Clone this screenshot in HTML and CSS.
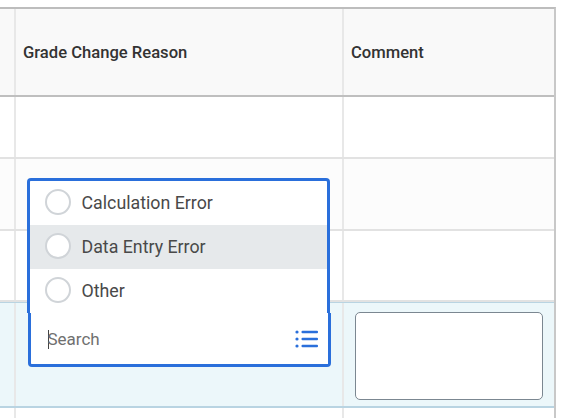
FILE: index.html
```html
<!DOCTYPE html>
<html lang="en">
<head>
	<meta charset="UTF-8">
	<title>Grade Change Reason</title>
	<link rel="stylesheet" href="styles.css">
</head>
<body>
	<div class="grid">
		<div class="row head">
			<div class="cell"></div>
			<div class="cell">Grade Change Reason</div>
			<div class="cell">Comment</div>
		</div>
		<div class="row r1">
			<div class="cell"></div>
			<div class="cell"></div>
			<div class="cell"></div>
		</div>
		<div class="row r2">
			<div class="cell"></div>
			<div class="cell"></div>
			<div class="cell"></div>
		</div>
		<div class="row r3">
			<div class="cell"></div>
			<div class="cell"></div>
			<div class="cell"></div>
		</div>
		<div class="row current">
			<div class="cell"></div>
			<div class="cell"></div>
			<div class="cell"><div class="comment"></div></div>
		</div>
		<div class="row last">
			<div class="cell"></div>
			<div class="cell"></div>
			<div class="cell"></div>
		</div>

		<!-- dropdown over the table -->
		<div class="picker">
			<ul class="options">
				<li><span class="radio"></span>Calculation Error</li>
				<li class="hover"><span class="radio"></span>Data Entry Error</li>
				<li><span class="radio"></span>Other</li>
			</ul>
			<div class="search">
				<span class="caret"></span>
				<span class="search-text">Search</span>
				<svg class="list-icon" width="24" height="18" viewBox="0 0 24 18">
					<circle cx="2" cy="2" r="1.6"/>
					<circle cx="2" cy="9" r="1.6"/>
					<circle cx="2" cy="16" r="1.6"/>
					<rect x="6.5" y="0.8" width="16.5" height="2.4" rx="1"/>
					<rect x="6.5" y="7.8" width="16.5" height="2.4" rx="1"/>
					<rect x="6.5" y="14.8" width="16.5" height="2.4" rx="1"/>
				</svg>
			</div>
		</div>
	</div>
</body>
</html>
```

FILE: styles.css
```css
html,body{margin:0;padding:0;background:#fff;}
body{padding-top:7px;height:418px;box-sizing:border-box;overflow:hidden;font-family:Roboto,"Liberation Sans",sans-serif;}
ul{list-style:none;margin:0;padding:0;}

.grid{position:relative;width:556px;height:411px;border-top:2px solid #bdbdbd;border-right:2px solid #c8c8c8;box-sizing:border-box;}
.row{display:grid;grid-template-columns:16px 328px 1fr;box-sizing:border-box;border-bottom:2px solid #e2e2e2;}
.cell{border-right:2px solid #e8e8e8;box-sizing:border-box;}
.cell:last-child{border-right:0;}

.head{height:88px;background:#f9f9f9;border-bottom-color:#bfbfbf;}
.head .cell{display:flex;align-items:center;padding-left:7px;font-size:16.6px;font-weight:500;color:#333;}
.r1{height:62px;}
.r2{height:72px;background:#fcfcfc;}
.r3{height:71px;}
.current{height:106px;background:#ecf7fa;border-top:1px solid #b9d4e2;border-bottom:2px solid #b9d4e2;}
.current .cell:last-child{padding:9px 0 0 11px;}
.last{height:11px;border-bottom:0;}

.comment{width:188px;height:88px;box-sizing:border-box;background:#fff;border:1px solid #7b8791;border-radius:5px;}

.picker{position:absolute;left:26.5px;top:169px;width:304px;}
.options{box-sizing:border-box;width:303px;height:135px;background:#fff;border:3px solid #2a6fdb;border-bottom:0;border-radius:4px 4px 0 0;}
.options li{display:flex;align-items:center;box-sizing:border-box;height:44px;padding:0 0 2px 15px;font-size:17.8px;color:#494949;}
.options li.hover{background:#e6e9eb;}
.radio{width:26px;height:26px;box-sizing:border-box;margin-right:11px;background:#fff;border:2px solid #d0d4d8;border-radius:50%;}

.search{display:flex;align-items:center;box-sizing:border-box;width:303px;height:54px;margin-left:1px;padding:1px 9px 0 17px;background:#fff;border:3px solid #2a6fdb;border-top:0;border-radius:0 0 4px 4px;}
.caret{width:1.5px;height:19px;margin-right:-1.5px;background:#444;}
.search-text{flex:1;font-size:17px;color:#707070;}
.list-icon{fill:#2a6fdb;}
```
